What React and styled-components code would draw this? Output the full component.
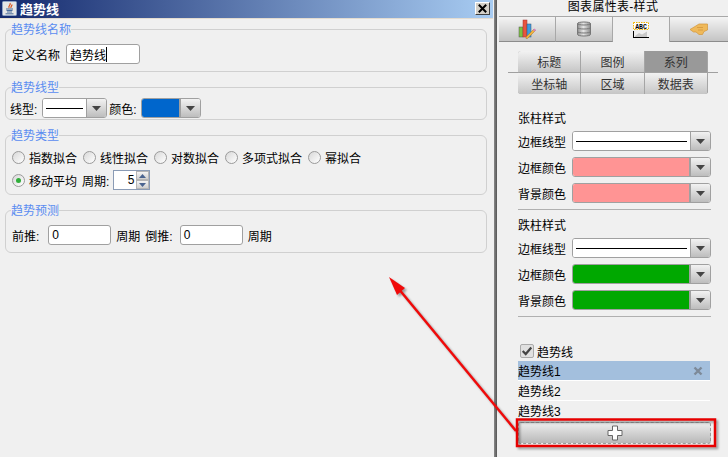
import React from "react";
import styled, { createGlobalStyle } from "styled-components";

const GlobalStyle = createGlobalStyle`
  html, body {
    margin: 0;
    padding: 0;
    background: #f0f0f0;
  }
  body {
    font-family: "Liberation Sans", "Noto Sans CJK SC", sans-serif;
    font-size: 12px;
    color: #000;
  }
`;

function Arrow() {
  return (
    <ArrowBtn>
      <svg width="9" height="5" viewBox="0 0 9 5">
        <path d="M0 0h9L4.500 5z" fill="#444" />
      </svg>
    </ArrowBtn>
  );
}

function LineSelect() {
  return (
    <SelectBox>
      <LineField>
        <LineStroke />
      </LineField>
      <Arrow />
    </SelectBox>
  );
}

function ColorSelect({ color }) {
  return (
    <SelectBox>
      <ColorField $color={color} />
      <Arrow />
    </SelectBox>
  );
}

function Radio({ checked, label }) {
  return (
    <RadioItem>
      <RadioDot $checked={checked} />
      {label}
    </RadioItem>
  );
}

function JavaIcon() {
  return (
    <svg width="15" height="15" viewBox="0 0 15 15">
      <rect x=".5" y=".5" width="14" height="14" rx="1" fill="#e6e6e6" stroke="#8fa2c4" />
      <path d="M8 2c1.500 2-2.500 3-.8 5M10 3.500c0 1.500-1.500 2-1 3.500" stroke="#d9531e" strokeWidth="1.200" fill="none" />
      <path d="M4 8h7M4.500 9.500h6M5 11h5M3.500 12.800h8" stroke="#4a6c9b" fill="none" />
    </svg>
  );
}

function ChartIcon() {
  return (
    <svg width="18" height="20" viewBox="0 0 18 20">
      <rect x="1" y="8" width="4" height="10" fill="#7cc242" stroke="#555" strokeWidth=".5" />
      <rect x="5" y="1" width="4" height="17" fill="#e8553f" stroke="#a33" strokeWidth=".5" />
      <rect x="9" y="5" width="4" height="13" fill="#3f9be0" stroke="#357" strokeWidth=".5" />
      <path d="M8 18l8-8 1.500 1.500-8 8H8z" fill="#f3b23c" stroke="#a47b2a" strokeWidth=".5" />
      <path d="M15 11l1.500-1.500 1.500 1.500-1.500 1.500z" fill="#d77fc0" />
    </svg>
  );
}

function DbIcon() {
  return (
    <svg width="14" height="16" viewBox="0 0 14 16">
      <defs>
        <linearGradient id="db" x1="0" x2="1" y1="0" y2="0">
          <stop offset="0" stopColor="#8f8f8f" />
          <stop offset=".45" stopColor="#e6e6e6" />
          <stop offset="1" stopColor="#8a8a8a" />
        </linearGradient>
      </defs>
      <path d="M.5 2.500C.5.500 13.500.500 13.500 2.500v11c0 2-13 2-13 0z" fill="url(#db)" stroke="#777" />
      <path d="M.5 2.500c0 2 13 2 13 0M.5 6.500c0 2 13 2 13 0M.5 10.500c0 2 13 2 13 0" fill="none" stroke="#777" />
    </svg>
  );
}

function AbcIcon() {
  return (
    <svg width="16" height="16" viewBox="0 0 16 16">
      <rect x=".5" y=".5" width="15" height="7" fill="#fff" stroke="#f2b500" strokeDasharray="1.500 1" />
      <text x="8" y="6.500" textAnchor="middle" fontSize="6.500" fontWeight="bold" fontFamily="Liberation Mono, monospace">ABC</text>
      <path d="M.5 16V9" stroke="#000" />
      <path d="M0 15.500h16" stroke="#000" />
      <path d="M2 14l4-3 3 1.500 5-3V15H2z" fill="#c8c8c8" />
    </svg>
  );
}

function HandIcon() {
  return (
    <svg width="18" height="12" viewBox="0 0 18 12">
      <path d="M0 6.500 5 3.500 9 1h8.500v6L14 8.500l-1.500 3H9L6 9H3.500z" fill="#efb95a" stroke="#d2963a" strokeWidth=".7" />
      <path d="M7 4.500h6M8 7h5" stroke="#c98a33" strokeWidth=".6" />
    </svg>
  );
}

export default function App() {
  return (
    <>
      <GlobalStyle />
      <Page>
        <LeftPane>
          <TitleBar>
            <JavaIcon />
            <TitleText>趋势线</TitleText>
            <CloseBtn>
              <svg width="9" height="9" viewBox="0 0 9 9">
                <path d="M.8.800l7.400 7.400M8.200.800L.8 8.200" stroke="#000" strokeWidth="2" />
              </svg>
            </CloseBtn>
          </TitleBar>
          <Groups>
            <Group $h={51}>
              <Legend>趋势线名称</Legend>
              <Row $pl={6} $top={6}>
                定义名称
                <TextInput $w={74} $ml={6} $cursor>趋势线</TextInput>
              </Row>
            </Group>
            <Group $h={41}>
              <Legend>趋势线型</Legend>
              <Row $pl={4} $top={2}>
                线型:
                <SmallSelect $w={65} $ml={5}>
                  <LineField>
                    <LineStroke />
                  </LineField>
                  <Arrow />
                </SmallSelect>
                <Label $ml={2}>颜色:</Label>
                <SmallSelect $w={60} $ml={4}>
                  <ColorField $color="#0066cc" />
                  <Arrow />
                </SmallSelect>
              </Row>
            </Group>
            <Group $h={68}>
              <Legend>趋势类型</Legend>
              <Row $pl={6} $top={3} $gap={6}>
                <Radio label="指数拟合" />
                <Radio label="线性拟合" />
                <Radio label="对数拟合" />
                <Radio label="多项式拟合" />
                <Radio label="幂拟合" />
              </Row>
              <Row $pl={6} $top={1}>
                <Radio checked label="移动平均" />
                <Label $ml={5}>周期:</Label>
                <Spinner>
                  <SpinValue>5</SpinValue>
                  <SpinBtns>
                    <SpinBtn>
                      <svg width="7" height="4" viewBox="0 0 7 4"><path d="M0 4L3.500 0 7 4z" fill="#4a6490" /></svg>
                    </SpinBtn>
                    <SpinBtn>
                      <svg width="7" height="4" viewBox="0 0 7 4"><path d="M0 0h7L3.500 4z" fill="#4a6490" /></svg>
                    </SpinBtn>
                  </SpinBtns>
                </Spinner>
              </Row>
            </Group>
            <Group $h={51}>
              <Legend>趋势预测</Legend>
              <Row $pl={6} $top={6}>
                前推:
                <TextInput $w={63} $ml={9}>0</TextInput>
                <Label $ml={5}>周期</Label>
                <Label $ml={5}>倒推:</Label>
                <TextInput $w={63} $ml={7}>0</TextInput>
                <Label $ml={5}>周期</Label>
              </Row>
            </Group>
          </Groups>
        </LeftPane>
        <Divider />
        <RightPane>
          <PaneTitle>图表属性表-样式</PaneTitle>
          <TabBar>
            <MainTab><ChartIcon /></MainTab>
            <MainTab><DbIcon /></MainTab>
            <MainTab $active><AbcIcon /></MainTab>
            <MainTab $last><HandIcon /></MainTab>
          </TabBar>
          <SubTabsWrap>
            <SubTabs>
              <SubTab>标题</SubTab>
              <SubTab>图例</SubTab>
              <SubTab $active>系列</SubTab>
              <SubTab>坐标轴</SubTab>
              <SubTab>区域</SubTab>
              <SubTab>数据表</SubTab>
            </SubTabs>
          </SubTabsWrap>
          <Section $top={16}>
            <SectionTitle>张柱样式</SectionTitle>
            <PropRow>边框线型<LineSelect /></PropRow>
            <PropRow>边框颜色<ColorSelect color="#ff9494" /></PropRow>
            <PropRow>背景颜色<ColorSelect color="#ff9494" /></PropRow>
            <Rule />
          </Section>
          <Section $top={7}>
            <SectionTitle>跌柱样式</SectionTitle>
            <PropRow>边框线型<LineSelect /></PropRow>
            <PropRow>边框颜色<ColorSelect color="#00a800" /></PropRow>
            <PropRow>背景颜色<ColorSelect color="#00a800" /></PropRow>
            <Rule />
          </Section>
          <TrendCheck>
            <CheckBox>
              <svg width="14" height="12" viewBox="0 0 14 12">
                <path d="M2 6l3.500 3.500L12 2" stroke="#444" strokeWidth="2.600" fill="none" />
              </svg>
            </CheckBox>
            趋势线
          </TrendCheck>
          <TrendList>
            <TrendItem $selected>
              趋势线1
              <svg width="10" height="10" viewBox="0 0 10 10">
                <path d="M1.500 1.500l7 7M8.500 1.500l-7 7" stroke="#7d8a99" strokeWidth="2.400" />
              </svg>
            </TrendItem>
            <TrendItem>趋势线2</TrendItem>
            <TrendItem>趋势线3</TrendItem>
          </TrendList>
          <AddButton>
            <svg width="16" height="16" viewBox="0 0 16 16">
              <path d="M5.500 1h5v4.500H15v5h-4.500V15h-5v-4.500H1v-5h4.500z" fill="#fff" stroke="#666" strokeLinejoin="round" />
            </svg>
          </AddButton>
        </RightPane>
        <Overlay width="728" height="457" viewBox="0 0 728 457">
          <path d="M516 431L398 288" stroke="#f00a0a" strokeWidth="2.500" fill="none" />
          <path d="M389 277l16 11-8 7z" fill="#f00a0a" />
          <rect x="517" y="419.500" width="198" height="26.500" fill="none" stroke="#e60000" strokeWidth="2.500" />
        </Overlay>
      </Page>
    </>
  );
}

const Page = styled.div`
  position: relative;
  display: flex;
  width: 728px;
  height: 457px;
  overflow: hidden;
  background: #f0f0f0;
`;

const LeftPane = styled.div`
  width: 493px;
  flex: none;
  display: flex;
  flex-direction: column;
`;

const TitleBar = styled.div`
  height: 19px;
  flex: none;
  display: flex;
  align-items: center;
  padding: 0 3px 1px 2px;
  box-sizing: border-box;
  background: linear-gradient(90deg, #14296d 0%, #a8ccf2 100%);
  border-bottom: 1px solid #e4dcd0;
`;

const TitleText = styled.span`
  margin-left: 3px;
  color: #fff;
  font-weight: bold;
  font-size: 13px;
  flex: 1;
`;

const CloseBtn = styled.div`
  width: 15px;
  height: 13px;
  display: flex;
  align-items: center;
  justify-content: center;
  background: #d4d0c8;
  border: 1px solid;
  border-color: #fff #404040 #404040 #fff;
  box-sizing: border-box;
`;

const Groups = styled.div`
  display: flex;
  flex-direction: column;
  gap: 7px;
  padding: 2px 6px 0 5px;
`;

const Group = styled.fieldset`
  margin: 0;
  padding: 0;
  min-width: 0;
  height: ${(p) => p.$h}px;
  box-sizing: border-box;
  border: 1px solid #d0d0d0;
  border-radius: 6px;
`;

// the caption sits a little under the border line
const Legend = styled.legend`
  position: relative;
  top: 1px;
  margin-left: 5px;
  padding: 0;
  color: #5a8cf0;
  font-size: 12px;
  line-height: 16px;
`;

const Row = styled.div`
  display: flex;
  align-items: center;
  height: 22px;
  padding-left: ${(p) => p.$pl}px;
  margin-top: ${(p) => p.$top}px;
  gap: ${(p) => p.$gap || 0}px;
  white-space: nowrap;
`;

const Label = styled.span`
  margin-left: ${(p) => p.$ml}px;
`;

const TextInput = styled.div`
  width: ${(p) => p.$w}px;
  height: 20px;
  margin-left: ${(p) => p.$ml}px;
  padding-left: 3px;
  box-sizing: border-box;
  display: flex;
  align-items: center;
  background: #fff;
  border: 1px solid #a0a0a0;
  border-radius: 3px;
  ${(p) => (p.$cursor ? "&::after { content: ''; width: 1px; height: 15px; background: #000; }" : "")}
`;

const SelectBox = styled.div`
  display: flex;
  width: 139px;
  height: 20px;
  box-sizing: border-box;
  margin-left: auto;
  border: 1px solid #a0a0a0;
  border-radius: 3px;
  overflow: hidden;
  background: #fff;
`;

const SmallSelect = styled(SelectBox)`
  width: ${(p) => p.$w}px;
  margin-left: ${(p) => p.$ml}px;
`;

const LineField = styled.div`
  flex: 1;
  display: flex;
  align-items: center;
  padding: 0 3px;
  background: #fff;
`;

const LineStroke = styled.div`
  width: 100%;
  height: 1px;
  background: #000;
`;

const ColorField = styled.div`
  flex: 1;
  background: ${(p) => p.$color};
  border-right: 1px solid #a0a0a0;
`;

const ArrowBtn = styled.div`
  width: 19px;
  flex: none;
  display: flex;
  align-items: center;
  justify-content: center;
  background: linear-gradient(180deg, #f2f2f2, #bdbdbd);
  border-left: 1px solid #a0a0a0;
`;

const RadioItem = styled.div`
  display: flex;
  align-items: center;
  gap: 4px;
`;

const RadioDot = styled.span`
  width: 13px;
  height: 13px;
  box-sizing: border-box;
  display: flex;
  align-items: center;
  justify-content: center;
  border: 1px solid #9a9a9a;
  border-radius: 50%;
  background: linear-gradient(135deg, #d8d8d8, #fff);
  &::after {
    content: "";
    display: ${(p) => (p.$checked ? "block" : "none")};
    width: 5px;
    height: 5px;
    border-radius: 50%;
    background: #2fae3a;
  }
`;

const Spinner = styled.div`
  display: flex;
  width: 37px;
  height: 20px;
  margin-left: 4px;
  box-sizing: border-box;
  border: 1px solid #8a9bb5;
  background: #fff;
`;

const SpinValue = styled.div`
  flex: 1;
  text-align: right;
  padding-right: 2px;
  line-height: 18px;
`;

const SpinBtns = styled.div`
  width: 13px;
  display: flex;
  flex-direction: column;
`;

const SpinBtn = styled.div`
  flex: 1;
  display: flex;
  align-items: center;
  justify-content: center;
  background: linear-gradient(180deg, #f4f4f4, #cfcfcf);
  border: 1px solid #b5b5b5;
`;

const Divider = styled.div`
  width: 5px;
  flex: none;
  box-sizing: border-box;
  background: linear-gradient(90deg, #8a8a8a, #555);
  border-left: 1px solid #f0f0f0;
  border-right: 1px solid #f0f0f0;
`;

const RightPane = styled.div`
  flex: 1;
  display: flex;
  flex-direction: column;
  min-width: 0;
`;

const PaneTitle = styled.div`
  height: 16px;
  line-height: 14px;
  text-align: center;
  letter-spacing: 0.3px;
`;

const TabBar = styled.div`
  display: grid;
  grid-template-columns: 57px 57px 57px 1fr;
  height: 26px;
  margin-left: 1px;
  box-sizing: border-box;
`;

const MainTab = styled.div`
  display: flex;
  align-items: center;
  justify-content: center;
  box-sizing: border-box;
  border-top: 1px solid #a8a8a8;
  border-right: ${(p) => (p.$last ? "none" : "1px solid #a8a8a8")};
  border-bottom: ${(p) => (p.$active ? "none" : "1px solid #8c8c8c")};
  background: ${(p) => (p.$active ? "#f0f0f0" : "linear-gradient(180deg, #f4f4f4, #c4c4c4)")};
`;

const SubTabsWrap = styled.div`
  position: relative;
  margin: 9px 0 0 20px;
  width: 190px;
  &::before {
    content: "";
    position: absolute;
    left: -10px;
    right: -10px;
    top: 21px;
    height: 1px;
    background: #a0a0a0;
  }
`;

const SubTabs = styled.div`
  position: relative;
  display: grid;
  grid-template-columns: repeat(3, 1fr);
  grid-template-rows: 21px 21px;
  row-gap: 1px;
  overflow: hidden;
  border-radius: 3px;
  box-shadow: inset 0 0 0 1px #a5a5a5;
`;

const SubTab = styled.div`
  display: flex;
  align-items: center;
  justify-content: center;
  box-sizing: border-box;
  font-size: 12px;
  color: #333;
  border-right: 1px solid #a5a5a5;
  background: ${(p) => (p.$active ? "#999" : "linear-gradient(180deg, #f2f2f2, #c6c6c6)")};
`;

const Section = styled.div`
  display: flex;
  flex-direction: column;
  margin: ${(p) => p.$top}px 17px 0 20px;
`;

const SectionTitle = styled.div`
  height: 18px;
  line-height: 18px;
  margin-bottom: 3px;
`;

const PropRow = styled.div`
  display: flex;
  align-items: center;
  height: 20px;
  white-space: nowrap;
  & + & {
    margin-top: 6px;
  }
`;

const Rule = styled.div`
  height: 1px;
  margin-top: 6px;
  background: #b0b0b0;
`;

const TrendCheck = styled.div`
  display: flex;
  align-items: center;
  gap: 3px;
  height: 16px;
  margin: 26px 0 0 22px;
`;

const CheckBox = styled.span`
  width: 14px;
  height: 14px;
  box-sizing: border-box;
  display: flex;
  align-items: center;
  justify-content: center;
  border: 1px solid #aaa;
  border-radius: 2px;
  background: #e0e0e0;
`;

const TrendList = styled.div`
  display: flex;
  flex-direction: column;
  margin: 2px 18px 0 20px;
`;

const TrendItem = styled.div`
  height: 20px;
  flex: none;
  box-sizing: border-box;
  display: flex;
  align-items: center;
  justify-content: space-between;
  padding-right: 7px;
  background: ${(p) => (p.$selected ? "#a3bfdd" : "#f0f0f0")};
  border-bottom: 1px solid #fff;
`;

const AddButton = styled.div`
  height: 22px;
  flex: none;
  margin: 1px 17px 0 20px;
  display: flex;
  align-items: center;
  justify-content: center;
  box-sizing: border-box;
  border: 1px dashed #9a9a9a;
  border-radius: 3px;
  background: linear-gradient(180deg, #ececec, #b8b8b8);
`;

const Overlay = styled.svg`
  position: absolute;
  left: 0;
  top: 0;
  pointer-events: none;
  filter: drop-shadow(2px 2px 1px rgba(0, 0, 0, 0.35));
`;
